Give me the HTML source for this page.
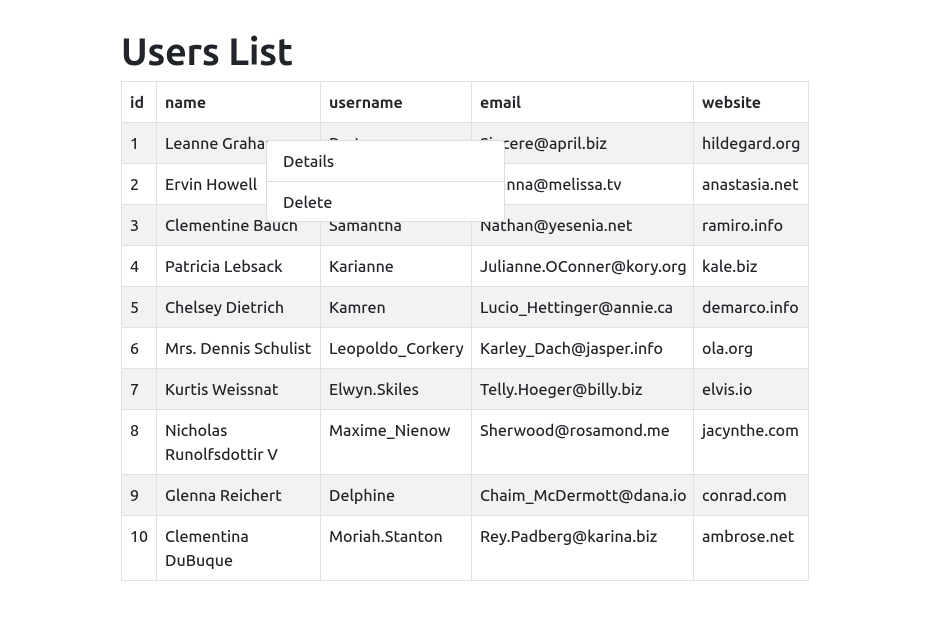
<!DOCTYPE html>
<html><head><meta charset="utf-8"><style>
body{margin:0;background:#fff;font-family:"Ubuntu","Liberation Sans","DejaVu Sans",sans-serif;color:#212529;width:942px;height:622px;position:relative;overflow:hidden;font-weight:500}
h1{position:absolute;left:121px;top:28px;margin:0;font-size:38px;font-weight:600;line-height:48px;letter-spacing:-0.3px}
table{position:absolute;left:121px;top:81px;border-collapse:collapse;table-layout:fixed;width:687px;font-size:16px}
td,th{border:1px solid #dee2e6;padding:9px 8px 7px;vertical-align:top;line-height:24px;text-align:left;box-sizing:border-box}
th{font-weight:bold;height:41px}
td{height:41px}
tbody tr:nth-child(odd){background:#f2f2f2}
tr.tall td{height:65px}
.menu{position:absolute;left:266px;top:140px;width:239px;height:82px;background:#fff;border:1px solid #ddd;border-radius:4px;box-sizing:border-box;font-size:16px}
.menu div{height:40px;line-height:42px;padding-left:16px}
.menu div+div{border-top:1px solid #ddd}
</style></head><body>
<h1>Users List</h1>
<table>
<colgroup><col style="width:35px"><col style="width:164px"><col style="width:151px"><col style="width:222px"><col style="width:115px"></colgroup>
<thead><tr><th>id</th><th>name</th><th>username</th><th>email</th><th>website</th></tr></thead>
<tbody>
<tr><td>1</td><td>Leanne Graham</td><td>Bret</td><td>Sincere@april.biz</td><td>hildegard.org</td></tr>
<tr><td>2</td><td>Ervin Howell</td><td>Antonette</td><td>Shanna@melissa.tv</td><td>anastasia.net</td></tr>
<tr><td>3</td><td>Clementine Bauch</td><td>Samantha</td><td>Nathan@yesenia.net</td><td>ramiro.info</td></tr>
<tr><td>4</td><td>Patricia Lebsack</td><td>Karianne</td><td>Julianne.OConner@kory.org</td><td>kale.biz</td></tr>
<tr><td>5</td><td>Chelsey Dietrich</td><td>Kamren</td><td>Lucio_Hettinger@annie.ca</td><td>demarco.info</td></tr>
<tr><td>6</td><td>Mrs. Dennis Schulist</td><td>Leopoldo_Corkery</td><td>Karley_Dach@jasper.info</td><td>ola.org</td></tr>
<tr><td>7</td><td>Kurtis Weissnat</td><td>Elwyn.Skiles</td><td>Telly.Hoeger@billy.biz</td><td>elvis.io</td></tr>
<tr class="tall"><td>8</td><td>Nicholas Runolfsdottir V</td><td>Maxime_Nienow</td><td>Sherwood@rosamond.me</td><td>jacynthe.com</td></tr>
<tr><td>9</td><td>Glenna Reichert</td><td>Delphine</td><td>Chaim_McDermott@dana.io</td><td>conrad.com</td></tr>
<tr class="tall"><td>10</td><td>Clementina DuBuque</td><td>Moriah.Stanton</td><td>Rey.Padberg@karina.biz</td><td>ambrose.net</td></tr>
</tbody></table>
<div class="menu"><div>Details</div><div>Delete</div></div>
</body></html>
